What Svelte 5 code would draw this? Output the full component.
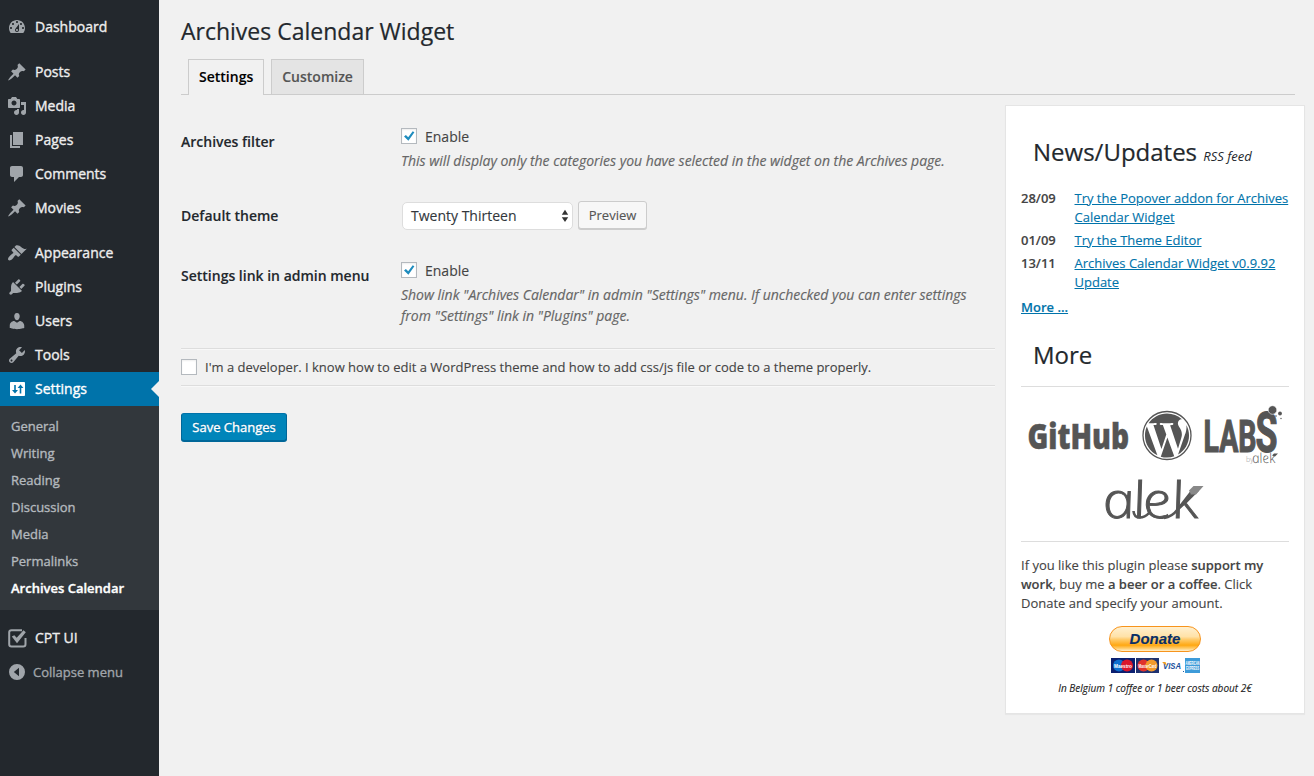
<script>
  const icons = {
    dashboard: 'M3.76 16h12.48c1.1-1.37 1.76-3.11 1.76-5 0-4.42-3.58-8-8-8s-8 3.58-8 8c0 1.89.66 3.63 1.76 5zM10 4c.55 0 1 .45 1 1s-.45 1-1 1-1-.45-1-1 .45-1 1-1zM6 6c.55 0 1 .45 1 1s-.45 1-1 1-1-.45-1-1 .45-1 1-1zm8 0c.55 0 1 .45 1 1s-.45 1-1 1-1-.45-1-1 .45-1 1-1zm-5.37 5.55L12 7v6c0 1.1-.9 2-2 2s-2-.9-2-2c0-.57.24-1.08.63-1.45zM4 10c.55 0 1 .45 1 1s-.45 1-1 1-1-.45-1-1 .45-1 1-1zm12 0c.55 0 1 .45 1 1s-.45 1-1 1-1-.45-1-1 .45-1 1-1zm-5 3c0-.55-.45-1-1-1s-1 .45-1 1 .45 1 1 1 1-.45 1-1z',
    pin: 'M10.44 3.02l1.82-1.82 6.36 6.35-1.83 1.82c-1.05-.68-2.48-.57-3.41.36l-.75.75c-.92.93-1.04 2.35-.35 3.41l-1.83 1.82-2.41-2.41-2.8 2.79c-.42.42-3.38 2.71-3.8 2.29s1.86-3.39 2.28-3.81l2.79-2.79L4.1 9.36l1.83-1.82c1.05.69 2.48.57 3.4-.36l.75-.75c.93-.92 1.05-2.35.36-3.41z',
    media: 'M13 11V4c0-.55-.45-1-1-1h-1.67L9 1H5L3.67 3H2c-.55 0-1 .45-1 1v7c0 .55.45 1 1 1h10c.55 0 1-.45 1-1zM7 4.5c1.38 0 2.5 1.12 2.5 2.5S8.38 9.5 7 9.5 4.5 8.38 4.5 7 5.62 4.5 7 4.5zM14 6h5v10.5c0 1.38-1.12 2.5-2.5 2.5S14 17.88 14 16.5s1.12-2.5 2.5-2.5c.17 0 .34.02.5.05V9h-3V6zm-4 8.05V13h2v3.5c0 1.38-1.12 2.5-2.5 2.5S7 17.88 7 16.5 8.12 14 9.5 14c.17 0 .34.02.5.05z',
    page: 'M6 15V2h10v13H6zm-1 1h8v2H3V5h2v11z',
    comment: 'M5 2h9c1.1 0 2 .9 2 2v7c0 1.1-.9 2-2 2h-2l-5 5v-5H5c-1.1 0-2-.9-2-2V4c0-1.1.9-2 2-2z',
    appearance: 'M14.48 11.06L7.41 3.99l1.5-1.5c.5-.56 2.3-.47 3.51.32 1.21.8 1.43 1.28 2.91 2.1 1.18.64 2.45 1.26 4.45.85zm-.71.71L6.7 4.7 4.93 6.47c-.39.39-.39 1.02 0 1.41l1.06 1.06c.39.39.39 1.03 0 1.42-.6.6-1.43 1.11-2.21 1.69-.35.26-.7.53-1.01.84C1.43 14.23.4 16.08 1.4 17.07c.99 1 2.84-.03 4.18-1.36.31-.31.58-.66.85-1.02.57-.78 1.08-1.61 1.69-2.21.39-.39 1.02-.39 1.41 0l1.06 1.06c.39.39 1.02.39 1.41 0z',
    plugin: 'M13.11 4.36L9.87 7.6 8 5.73l3.24-3.24c.35-.34 1.05-.2 1.56.32.52.51.66 1.21.31 1.55zm-8 1.77l.91-1.12 9.01 9.01-1.19.84c-.71.71-2.63 1.16-3.82 1.16H6.14L4.9 17.26c-.59.59-1.54.59-2.12 0-.59-.58-.59-1.53 0-2.12l1.24-1.24v-3.88c0-1.13.4-3.19 1.09-3.89zm7.26 3.97l3.24-3.24c.34-.35 1.04-.21 1.55.31.52.51.66 1.21.31 1.55l-3.24 3.25z',
    user: 'M10 9.25c-2.27 0-2.73-3.44-2.73-3.44C7 4.02 7.82 2 9.97 2c2.16 0 2.98 2.02 2.71 3.81 0 0-.41 3.44-2.68 3.44zm0 2.57L12.72 10c2.39 0 4.52 2.33 4.52 4.53v2.49s-3.65 1.13-7.24 1.13c-3.65 0-7.24-1.13-7.24-1.13v-2.49c0-2.25 1.94-4.48 4.47-4.48z',
    tool: 'M16.68 9.77c-1.34 1.34-3.3 1.67-4.95.99l-5.41 6.52c-.99.99-2.59.99-3.58 0s-.99-2.59 0-3.57l6.52-5.42c-.68-1.65-.35-3.61.99-4.95 1.28-1.28 3.12-1.62 4.72-1.06l-2.89 2.89 2.82 2.82 2.86-2.87c.53 1.58.18 3.39-1.08 4.65zM3.81 16.21c.4.39 1.04.39 1.43 0 .4-.4.4-1.04 0-1.43-.39-.4-1.03-.4-1.43 0-.39.39-.39 1.03 0 1.43z',
    settings: 'M4 3h13c.55 0 1 .45 1 1v12c0 .55-.45 1-1 1H4c-.55 0-1-.45-1-1V4c0-.55.45-1 1-1zM7.2 6v5H5l3 3.6 3-3.6H8.8V6zM12.7 14.500V9H10.600L13.500 5.400 16.400 9H14.300v5.500z'
  };
  const groups = [
    [['Dashboard', 'dashboard']],
    [['Posts', 'pin'], ['Media', 'media'], ['Pages', 'page'], ['Comments', 'comment'], ['Movies', 'pin']],
    [['Appearance', 'appearance'], ['Plugins', 'plugin'], ['Users', 'user'], ['Tools', 'tool'], ['Settings', 'settings']]
  ];
  const sub = ['General', 'Writing', 'Reading', 'Discussion', 'Media', 'Permalinks', 'Archives Calendar'];
  const news = [
    ['28/09', 'Try the Popover addon for Archives Calendar Widget'],
    ['01/09', 'Try the Theme Editor'],
    ['13/11', 'Archives Calendar Widget v0.9.92 Update']
  ];
</script>

{#snippet check(on)}
  <span class="box">
    {#if on}
      <svg width="14" height="14" viewBox="0 0 14 14"><path d="M2 7.600L3.900 6l2.300 2.300L10.700 2.200l1.700 1.100L6.400 11.700z" fill="#1e8cbe" /></svg>
    {/if}
  </span>
{/snippet}

<div class="page">
  <nav class="side">
    {#each groups as group}
      <div class="group">
        {#each group as [name, icon]}
          <div class="item" class:current={name === 'Settings'}>
            <svg width="20" height="20" viewBox="0 0 20 20"><path d={icons[icon]} fill-rule="evenodd" /></svg>
            <span>{name}</span>
          </div>
        {/each}
      </div>
    {/each}
    <div class="sub">
      {#each sub as s}
        <div class="subitem" class:active={s === 'Archives Calendar'}>{s}</div>
      {/each}
    </div>
    <div class="item">
      <svg width="20" height="20" viewBox="0 0 20 20">
        <path d="M15 2.200H4.500Q2.200 2.200 2.200 4.500V16.200Q2.200 18.500 4.500 18.500H16.200Q18.500 18.500 18.500 16.200V10" fill="none" stroke="#a0a5aa" stroke-width="2" />
        <path d="M4.800 8.500L7.300 7.300 9.700 9.800 16.500 2.200 18.800 4.200 10 15.200z" />
      </svg>
      <span>CPT UI</span>
    </div>
    <div class="item collapse">
      <svg width="20" height="20" viewBox="0 0 20 20"><path fill-rule="evenodd" d="M10 2a8 8 0 1 0 0 16a8 8 0 1 0 0-16zM12 5.800v8.400L6.800 10z" /></svg>
      <span>Collapse menu</span>
    </div>
  </nav>

  <main>
    <h1>Archives Calendar Widget</h1>
    <div class="tabs">
      <div class="tab on">Settings</div>
      <div class="tab">Customize</div>
    </div>
    <div class="cols">
      <section class="form">
        <div class="row r1">
          <div class="th">Archives filter</div>
          <div class="td">
            <div class="line">{@render check(true)}<span>Enable</span></div>
            <p class="desc">This will display only the categories you have selected in the widget on the Archives page.</p>
          </div>
        </div>
        <div class="row r2">
          <div class="th">Default theme</div>
          <div class="td pick">
            <div class="select">
              <span>Twenty Thirteen</span>
              <svg width="8" height="14" viewBox="0 0 8 14"><path d="M4 .8L7.200 5.800H.8zM4 13L.8 8.200h6.400z" fill="#333" /></svg>
            </div>
            <div class="btn">Preview</div>
          </div>
        </div>
        <div class="row r3">
          <div class="th">Settings link in admin menu</div>
          <div class="td">
            <div class="line">{@render check(true)}<span>Enable</span></div>
            <p class="desc">Show link "Archives Calendar" in admin "Settings" menu. If unchecked you can enter settings<br />from "Settings" link in "Plugins" page.</p>
          </div>
        </div>
        <div class="dev">{@render check(false)}<span>I'm a developer. I know how to edit a WordPress theme and how to add css/js file or code to a theme properly.</span></div>
        <div class="btn primary">Save Changes</div>
      </section>

      <aside>
        <h2>News/Updates <em>RSS feed</em></h2>
        <div class="news">
          {#each news as [date, title]}
            <b>{date}</b><div><a href="#news">{title}</a></div>
          {/each}
        </div>
        <div class="moreline"><a href="#more">More ...</a></div>
        <h2 class="h-more">More</h2>
        <div class="logos">
          <svg width="268" height="153" viewBox="0 0 268 153" fill="#555">
            <text class="gh" x="6.500" y="61.500" textLength="101.500" lengthAdjust="spacingAndGlyphs">GitHub</text>
            <circle cx="146" cy="48.500" r="24" fill="none" stroke="#555" stroke-width="1.300" />
            <g transform="translate(121.500 24) scale(2.042)">
              <path d="M21.469 6.825c.84 1.537 1.318 3.3 1.318 5.175 0 3.979-2.156 7.456-5.363 9.325l3.295-9.527c.615-1.54.82-2.771.82-3.864 0-.405-.026-.78-.07-1.11m-7.981.105c.647-.03 1.232-.105 1.232-.105.582-.075.514-.93-.067-.899 0 0-1.755.135-2.88.135-1.064 0-2.85-.15-2.85-.15-.585-.03-.661.855-.075.885 0 0 .54.061 1.125.09l1.68 4.605-2.37 7.08L5.354 6.9c.649-.03 1.234-.1 1.234-.1.585-.075.516-.93-.065-.896 0 0-1.746.138-2.874.138-.2 0-.438-.008-.69-.015C4.911 3.15 8.235 1.215 12 1.215c2.809 0 5.365 1.072 7.286 2.833-.046-.003-.091-.009-.141-.009-1.06 0-1.812.923-1.812 1.914 0 .89.513 1.643 1.06 2.531.411.72.89 1.643.89 2.977 0 .915-.354 1.994-.821 3.479l-1.075 3.585-3.9-11.61.001.014zM12 22.784c-1.059 0-2.081-.153-3.048-.437l3.237-9.406 3.315 9.087c.024.053.05.101.078.149-1.12.393-2.325.609-3.582.609M1.211 12c0-1.564.336-3.05.935-4.39L7.29 21.709C3.694 19.96 1.212 16.271 1.211 12" />
            </g>
            <text class="labs" x="182.500" y="65" font-size="44" textLength="53" lengthAdjust="spacingAndGlyphs">LAB</text>
            <text class="labs" x="234.500" y="64.500" font-size="55" textLength="22" lengthAdjust="spacingAndGlyphs">S</text>
            <circle cx="251.500" cy="23" r="4.300" stroke="#fff" stroke-width=".6" />
            <circle cx="259" cy="26.500" r="1.900" />
            <circle cx="255" cy="29" r=".8" />
            <circle cx="260" cy="31.500" r=".7" />
            <text class="by" x="225" y="75" font-size="7">by</text>
            <g transform="translate(232 75.500) skewX(12)"><text class="alek" stroke="none" font-size="14" textLength="23" lengthAdjust="spacingAndGlyphs">alek</text></g>
            <path d="M251 68.500l2-2h4l-3 3z" />
            <g transform="translate(84.500 130.500) skewX(12) scale(1.160 1)"><text class="alek" font-size="50" stroke="#555" stroke-width=".9" x="0 26 34.500 59.500">alek</text></g>
            <path d="M112.500 124Q113 130.500 118.500 130.500Q124 130.500 128 126M143 131Q151 130 157 122L171 104" fill="none" stroke="#555" stroke-width="2.600" />
            <path d="M168 103.500L172.500 99H182.500L175 107.500H170z" fill="#888" />
          </svg>
        </div>
        <p class="support">If you like this plugin please <b>support my work</b>, buy me <b>a beer or a coffee</b>. Click Donate and specify your amount.</p>
        <div class="donate">Donate</div>
        <svg class="cards" width="90" height="15" viewBox="0 0 90 15">
          <rect width="24" height="15" fill="#0b1f70" /><circle cx="8" cy="7.500" r="6" fill="#0c6fd0" /><circle cx="16" cy="7.500" r="6" fill="#d9162c" />
          <text x="3" y="9.700" textLength="18" lengthAdjust="spacingAndGlyphs" fill="#fff">Maestro</text>
          <rect x="25" width="23" height="15" fill="#1f3270" /><circle cx="32.500" cy="7.500" r="6" fill="#e0322d" /><circle cx="40.500" cy="7.500" r="6" fill="#f39a2b" />
          <text x="27.500" y="9.700" textLength="18" lengthAdjust="spacingAndGlyphs" fill="#fff">MasterCard</text>
          <text x="52" y="11" textLength="18" lengthAdjust="spacingAndGlyphs" class="visa">VISA</text>
          <path d="M51 4h3.500l1.500 4z" fill="#f2a01e" />
          <rect x="72" y="13" width="1" height="1" fill="#1a5fa8" />
          <rect x="74" width="15" height="15" fill="#3d9bd9" />
          <text x="74.500" y="7" textLength="14" lengthAdjust="spacingAndGlyphs" fill="#fff">AMERICAN</text>
          <text x="75" y="12" textLength="13" lengthAdjust="spacingAndGlyphs" fill="#fff">EXPRESS</text>
        </svg>
        <p class="note">In Belgium 1 coffee or 1 beer costs about 2€</p>
      </aside>
    </div>
  </main>
</div>

<style>
  :global(body) { background: #f1f1f1; }
  .page { display: flex; width: 1314px; height: 776px; overflow: hidden; background: #f1f1f1; color: #444; font: 14px/20px "Open Sans", sans-serif; }
  .page *, .page { box-sizing: border-box; }
  .side { width: 159px; background: #23282d; padding-top: 10px; flex: none; -webkit-text-stroke: .35px currentColor; }
  .group + .group { margin-top: 11px; }
  .item { height: 34px; display: flex; align-items: center; padding-left: 7px; gap: 8px; color: #eee; fill: #a0a5aa; }
  .item.current { background: #0073aa; color: #fff; fill: #fff; position: relative; }
  .item.current::after { content: ""; position: absolute; right: 0; top: 9px; border: 8px solid transparent; border-left: 0; border-right-color: #f1f1f1; }
  .sub { background: #32373c; padding: 7px 0 8px 11px; margin-bottom: 11px; font-size: 13px; color: #b4b9be; }
  .subitem { height: 27px; line-height: 26px; }
  .active { color: #fff; font-weight: 600; }
  .collapse { color: #a0a5aa; gap: 6px; font-size: 13px; }
  main { flex: 1; padding: 0 10px 0 22px; -webkit-text-stroke: .12px currentColor; }
  h1 { margin: 0; font-size: 23px; font-weight: 400; color: #23282d; line-height: 29px; padding: 17px 0 13px; -webkit-text-stroke: .2px currentColor; }
  .tabs { display: flex; height: 36px; width: 1114px; padding-left: 7px; gap: 7px; border-bottom: 1px solid #ccc; }
  .tab { height: 35px; border: 1px solid #ccc; border-bottom: 0; padding: 5px 10px; background: #e4e4e4; color: #555; font-weight: 600; line-height: 24px; }
  .tab.on { height: 36px; background: #f1f1f1; color: #000; }
  .cols { display: flex; justify-content: space-between; width: 1124px; }
  .form { width: 814px; padding-top: 17px; }
  .row { display: flex; }
  .r1 { height: 74px; }
  .r2 { height: 60px; }
  .r3 { height: 102px; }
  .th { width: 220px; padding-top: 20px; font-weight: 600; color: #23282d; }
  .td { padding-top: 15px; flex: 1; }
  .line { display: flex; align-items: center; gap: 8px; height: 20px; }
  .box { width: 16px; height: 16px; background: #fff; border: 1px solid #b4b9be; box-shadow: inset 0 1px 2px rgba(0,0,0,.07); display: flex; flex: none; }
  .line .box { margin-bottom: 2px; }
  .desc { margin: 3px 0 0; font-style: italic; line-height: 21px; color: #666; white-space: nowrap; letter-spacing: -.017px; -webkit-text-stroke: .15px currentColor; }
  .pick { display: flex; gap: 5px; align-items: flex-start; padding-left: 1px; }
  .select { width: 171px; height: 28px; margin-top: 1px; background: #fff; border: 1px solid #ddd; border-radius: 5px; display: flex; align-items: center; justify-content: space-between; padding: 0 3px 0 8px; color: #32373c; }
  .btn { width: 69px; height: 28px; border: 1px solid #ccc; border-radius: 3px; background: #f7f7f7; box-shadow: 0 1px 0 #ccc; font-size: 13px; line-height: 26px; text-align: center; color: #555; }
  .primary { width: 106px; margin-top: 27px; background: #0085ba; border-color: #0073aa #006799 #006799; box-shadow: 0 1px 0 #006799; color: #fff; -webkit-text-stroke: .35px #fff; text-shadow: 0 -1px 1px #006799; }
  .dev { height: 38px; border: solid #ddd; border-width: 1px 0; box-shadow: 0 1px 0 #f8f8f8, inset 0 1px 0 #f8f8f8; display: flex; align-items: center; gap: 8px; font-size: 13px; white-space: nowrap; }
  aside { width: 300px; height: 609px; margin-top: 10px; background: #fff; border: 1px solid #e5e5e5; box-shadow: 0 1px 1px rgba(0,0,0,.04); padding: 29px 15px 0; font-size: 13px; line-height: 19px; }
  h2 { margin: 0 0 16px 12px; font-size: 24px; line-height: 34px; font-weight: 400; color: #23282d; -webkit-text-stroke: .2px currentColor; }
  h2 em { font-size: 13px; -webkit-text-stroke: 0; }
  .news { display: grid; grid-template-columns: 53.500px 1fr; row-gap: 4px; }
  .news b, .support b { font-weight: 600; }
  a { color: #0073aa; text-decoration: underline; }
  .moreline { margin: 6px 0 21px; font-weight: 600; }
  .h-more { margin-bottom: 14px; }
  .logos { border: solid #ddd; border-width: 1px 0; height: 156px; -webkit-text-stroke: 0; }
  .gh { font: 800 36px "Open Sans", sans-serif; stroke: #555; stroke-width: .5px; }
  .labs { font-family: Roboto, sans-serif; font-weight: 700; stroke: #555; stroke-width: 1.2px; }
  .by { font-family: "Open Sans", sans-serif; fill: #999; font-weight: 300; }
  .alek { font-family: "Open Sans", sans-serif; font-weight: 300; font-style: italic; }
  .support { margin: 14px 0 13px; }
  .donate { width: 92px; height: 26px; margin: 0 auto; border: 1px solid #f7941d; border-radius: 13px; background: linear-gradient(#fff0cf 0, #ffe2a8 40%, #ffcb6b 52%, #ffa812 76%, #ffcf73 90%, #fff0d0 100%); color: #0a2f66; text-align: center; font: italic 700 15px/24px "Liberation Sans", sans-serif; }
  .cards { display: block; margin: 6px 0 0 90px; font: 700 5px "Liberation Sans", sans-serif; -webkit-text-stroke: 0; }
  .visa { font-size: 9px; font-style: italic; fill: #1a4f9c; }
  .note { margin: 6px 0 0; text-align: center; font-size: 10px; font-style: italic; white-space: nowrap; color: #222; }
</style>
